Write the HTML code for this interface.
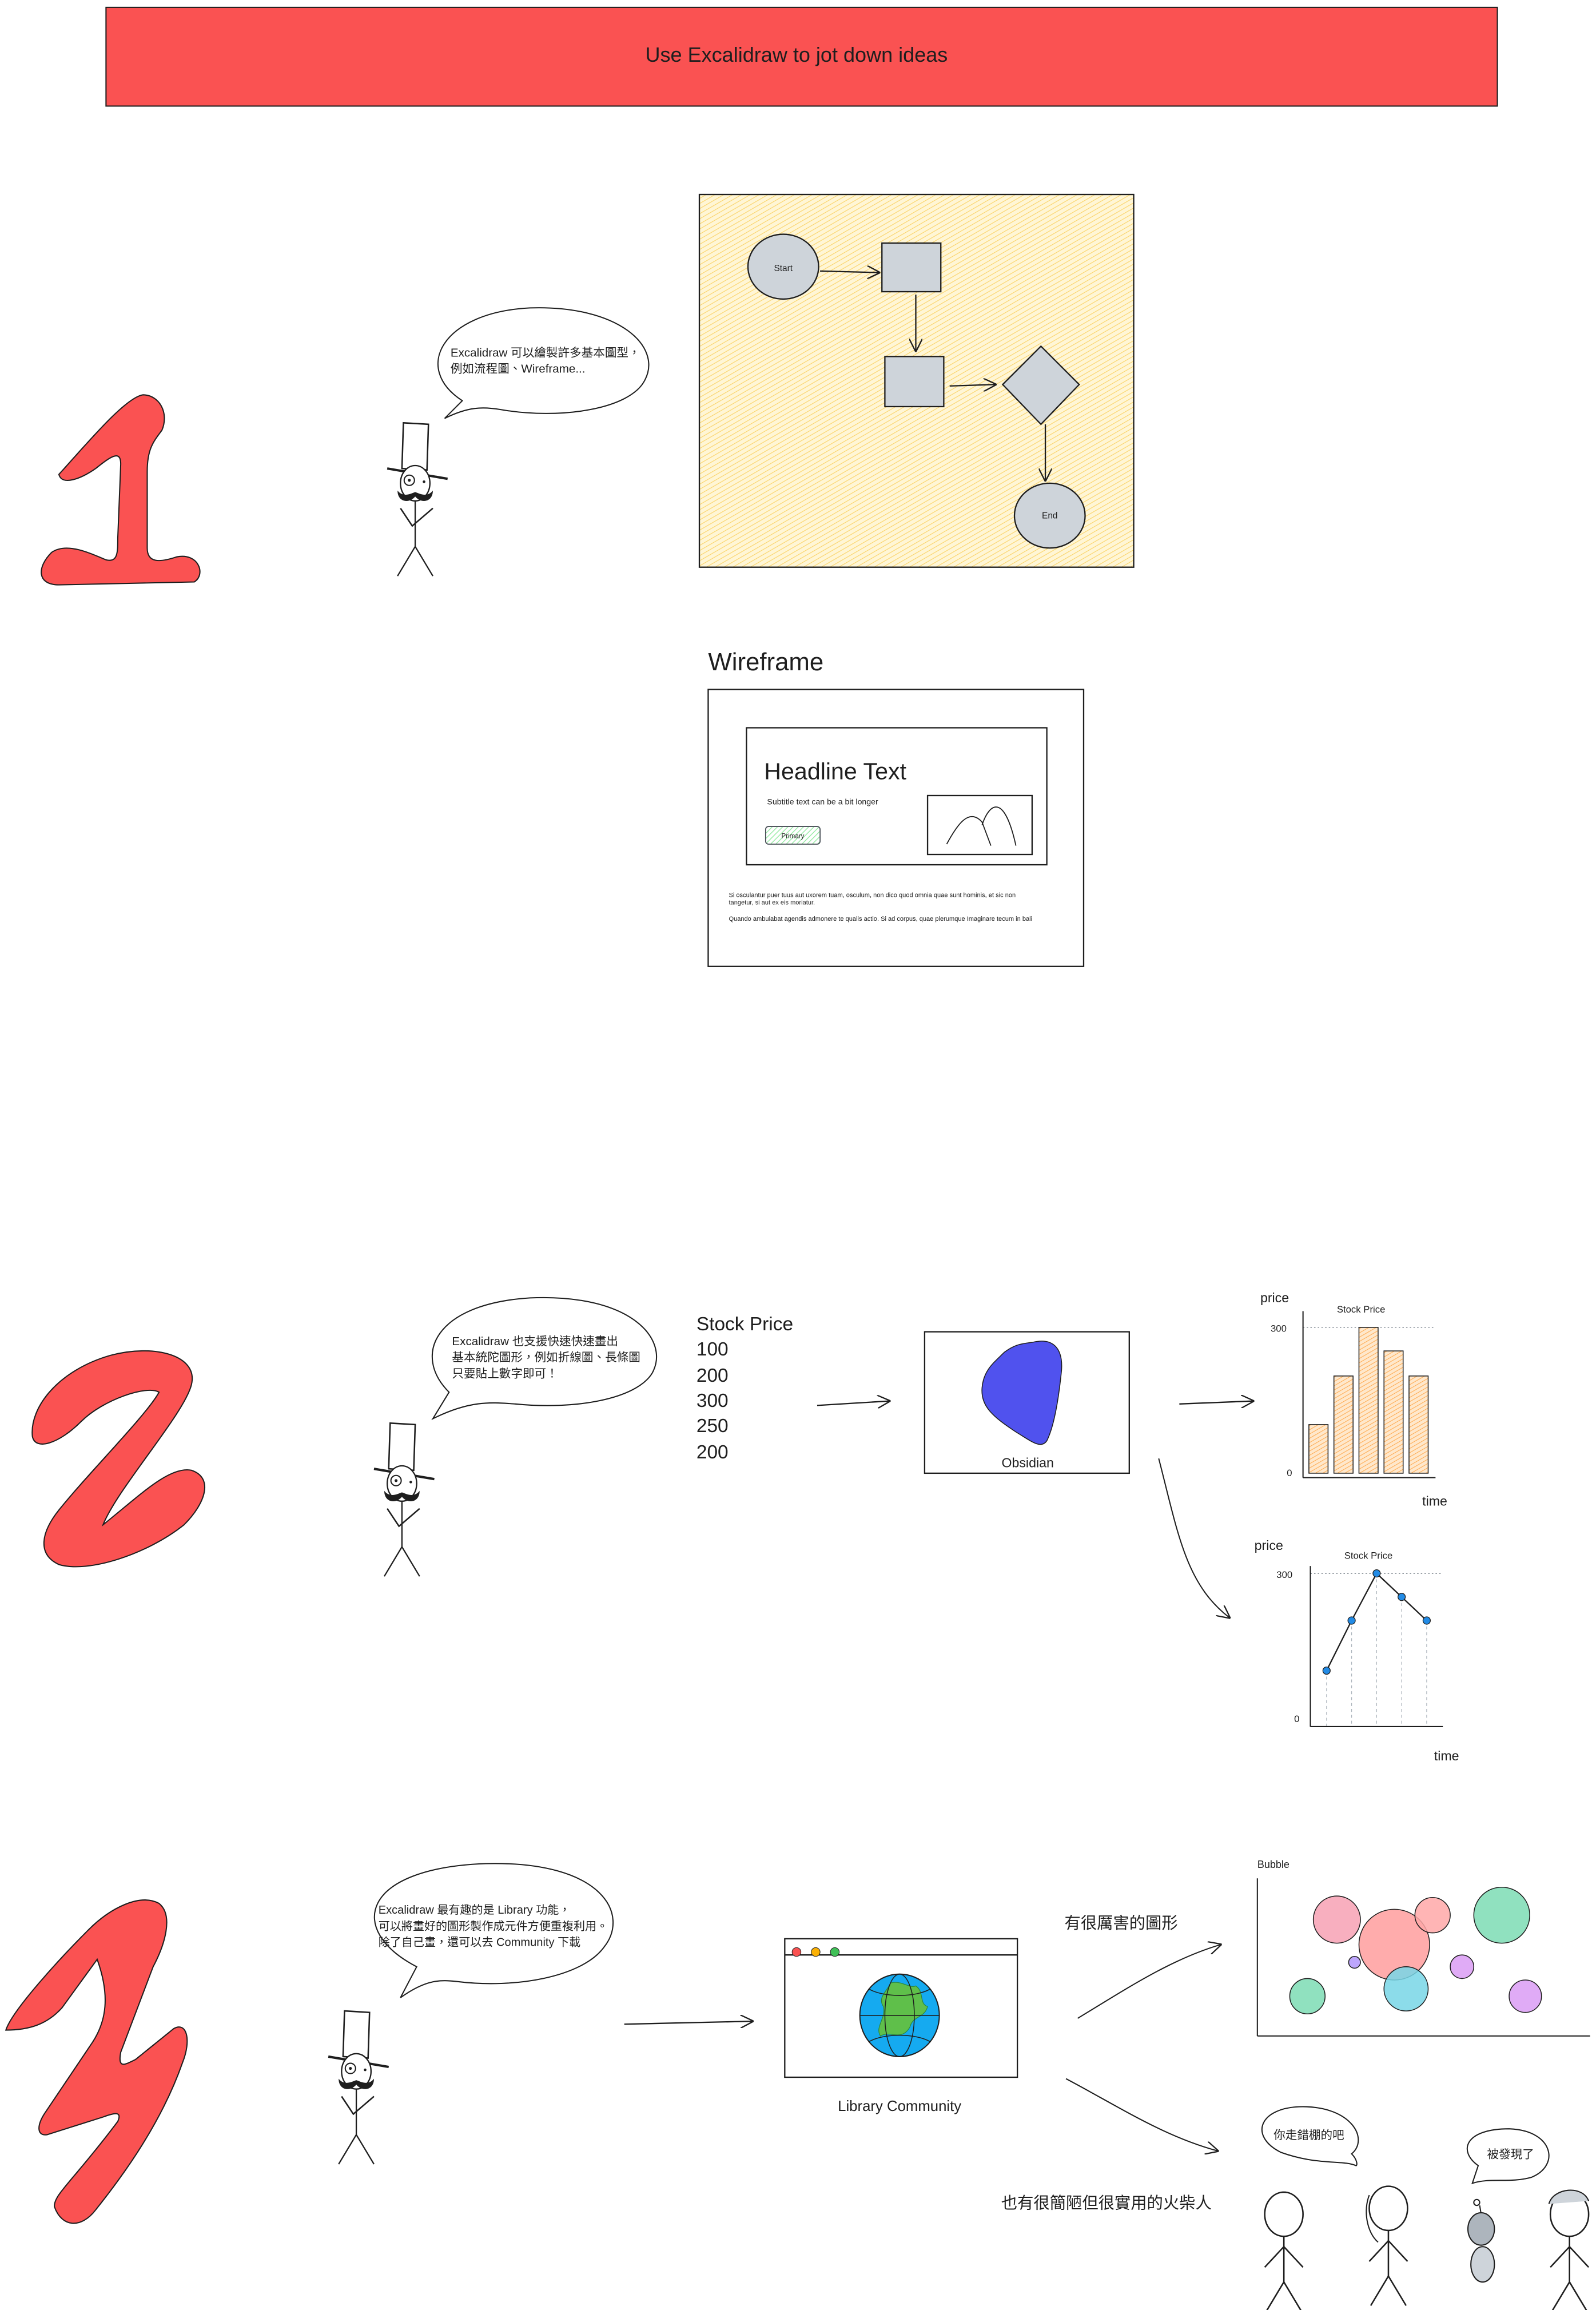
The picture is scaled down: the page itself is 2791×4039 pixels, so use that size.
<!DOCTYPE html>
<html><head><meta charset="utf-8">
<style>
html,body{margin:0;padding:0;background:#fff;}
svg{display:block;}
text{font-family:"Liberation Sans","Noto Sans CJK TC",sans-serif;fill:#1e1e1e;}
</style></head>
<body>
<svg width="2791" height="4039" viewBox="0 0 1084 1568" preserveAspectRatio="none" xmlns="http://www.w3.org/2000/svg">
<defs>
<pattern id="hy" width="3" height="3" patternUnits="userSpaceOnUse" patternTransform="rotate(60)">
<rect width="3" height="3" fill="#fff6d6"/><line x1="0" y1="0" x2="0" y2="3" stroke="#fad46a" stroke-width="0.9"/></pattern>
<pattern id="hg" width="2.5" height="2.5" patternUnits="userSpaceOnUse" patternTransform="rotate(45)">
<rect width="3" height="3" fill="#fff"/><line x1="0" y1="0" x2="0" y2="3" stroke="#8ce99a" stroke-width="1"/></pattern>
<pattern id="ho" width="2.5" height="2.5" patternUnits="userSpaceOnUse" patternTransform="rotate(60)">
<rect width="3" height="3" fill="#ffe8cc"/><line x1="0" y1="0" x2="0" y2="3" stroke="#ffa94d" stroke-width="0.8"/></pattern>
<marker id="ah" viewBox="0 0 10 10" refX="9" refY="5" markerWidth="9" markerHeight="9" orient="auto" markerUnits="userSpaceOnUse">
<path d="M0,0 L10,5 L0,10" fill="none" stroke="#1e1e1e" stroke-width="1"/></marker>
<g id="fig">
<path d="M-8,-38 L9,-37 L8,-6 L-9,-7 Z" fill="#fff" stroke="#1e1e1e" stroke-width="1"/>
<line x1="-19" y1="-7" x2="22" y2="0" stroke="#1e1e1e" stroke-width="1.6"/>
<ellipse cx="0" cy="3" rx="10" ry="12" fill="#fff" stroke="#1e1e1e" stroke-width="0.9"/>
<circle cx="-4" cy="1" r="3.5" fill="none" stroke="#1e1e1e" stroke-width="0.8"/>
<circle cx="-4" cy="1" r="1" fill="#1e1e1e"/><circle cx="6" cy="2" r="0.9" fill="#1e1e1e"/>
<path d="M-12,8 C-12,16 -4,17 0,12 C4,17 12,16 12,8 C8,13 3,10 0,9 C-3,10 -8,13 -12,8 Z" fill="#1e1e1e"/>
<line x1="0" y1="15" x2="0" y2="46" stroke="#1e1e1e" stroke-width="0.9"/>
<path d="M-10,20 L-2,32 L12,20" fill="none" stroke="#1e1e1e" stroke-width="1"/>
<path d="M-12,66 L0,46 L12,66" fill="none" stroke="#1e1e1e" stroke-width="0.9"/>
</g>
<g id="sf" fill="none" stroke="#1e1e1e" stroke-width="1">
<ellipse cx="0" cy="0" rx="13" ry="15" fill="#fff"/>
<line x1="0" y1="15" x2="0" y2="46"/><path d="M-13,36 L0,22 L13,36"/><path d="M-12,66 L0,46 L12,66"/>
</g>
</defs>

<rect x="72" y="5" width="945" height="67" fill="#fa5252" stroke="#1e1e1e" stroke-width="0.8"/>
<text x="541" y="42" font-size="14" text-anchor="middle">Use Excalidraw to jot down ideas</text>

<path d="M40,322 C60,300 85,270 97,268 C108,268 115,280 110,292 C104,300 100,305 100,320 L100,372 C100,382 108,382 120,378 C135,375 140,390 132,395 L40,397 C25,397 25,385 35,375 C45,368 60,375 72,380 C80,382 80,375 80,365 L82,315 C82,305 75,310 65,318 C55,325 42,330 40,322 Z" fill="#fa5252" stroke="#1e1e1e" stroke-width="0.8"/>

<path d="M314,272 C280,250 300,212 360,209 C420,207 450,235 438,258 C428,278 380,285 340,278 C328,276 318,276 302,284 Z" fill="#fff" stroke="#1e1e1e" stroke-width="0.8"/>
<text x="306" y="242" font-size="8">Excalidraw 可以繪製許多基本圖型，</text>
<text x="306" y="253" font-size="8">例如流程圖、Wireframe...</text>
<use href="#fig" x="282" y="325"/>

<rect x="475" y="132" width="295" height="253" fill="url(#hy)" stroke="#1e1e1e" stroke-width="0.9"/>
<ellipse cx="532" cy="181" rx="24" ry="22" fill="#ced4da" stroke="#1e1e1e" stroke-width="0.9"/>
<text x="532" y="184" font-size="6" text-anchor="middle">Start</text>
<rect x="599" y="165" width="40" height="33" fill="#ced4da" stroke="#1e1e1e" stroke-width="0.9"/>
<line x1="557" y1="184" x2="597" y2="185" stroke="#1e1e1e" stroke-width="0.9" marker-end="url(#ah)"/>
<line x1="622" y1="200" x2="622" y2="238" stroke="#1e1e1e" stroke-width="0.9" marker-end="url(#ah)"/>
<rect x="601" y="242" width="40" height="34" fill="#ced4da" stroke="#1e1e1e" stroke-width="0.9"/>
<line x1="645" y1="262" x2="676" y2="261" stroke="#1e1e1e" stroke-width="0.9" marker-end="url(#ah)"/>
<path d="M707,235 L733,261 L707,288 L681,261 Z" fill="#ced4da" stroke="#1e1e1e" stroke-width="0.9"/>
<line x1="710" y1="288" x2="710" y2="326" stroke="#1e1e1e" stroke-width="0.9" marker-end="url(#ah)"/>
<ellipse cx="713" cy="350" rx="24" ry="22" fill="#ced4da" stroke="#1e1e1e" stroke-width="0.9"/>
<text x="713" y="352" font-size="6" text-anchor="middle">End</text>

<text x="481" y="455" font-size="17">Wireframe</text>
<rect x="481" y="468" width="255" height="188" fill="#fff" stroke="#1e1e1e" stroke-width="0.9"/>
<rect x="507" y="494" width="204" height="93" fill="#fff" stroke="#1e1e1e" stroke-width="0.9"/>
<text x="519" y="529" font-size="16">Headline Text</text>
<text x="521" y="546" font-size="5.5">Subtitle text can be a bit longer</text>
<rect x="520" y="561" width="37" height="12" rx="2" fill="url(#hg)" stroke="#495057" stroke-width="0.7"/>
<text x="538.5" y="569" font-size="4.5" text-anchor="middle">Primary</text>
<rect x="630" y="540" width="71" height="40" fill="#fff" stroke="#1e1e1e" stroke-width="0.9"/>
<path d="M643,573 C650,560 658,548 667,558 L673,574 M667,560 C672,545 682,538 690,574" fill="none" stroke="#1e1e1e" stroke-width="0.7"/>
<text x="495" y="609" font-size="4.3">Si osculantur puer tuus aut uxorem tuam, osculum, non dico quod omnia quae sunt hominis, et sic non</text>
<text x="495" y="614" font-size="4.3">tangetur, si aut ex eis moriatur.</text>
<text x="495" y="625" font-size="4.3">Quando ambulabat agendis admonere te qualis actio. Si ad corpus, quae plerumque Imaginare tecum in bali</text>

<path d="M22,975 C20,955 40,930 75,920 C105,912 135,920 130,940 C125,960 80,1010 70,1035 C95,1015 115,995 130,998 C145,1003 140,1020 125,1035 C100,1055 60,1068 40,1062 C25,1055 28,1040 40,1025 C60,1000 100,960 108,945 C100,940 70,950 55,965 C40,980 24,985 22,975 Z" fill="#fa5252" stroke="#1e1e1e" stroke-width="0.8"/>

<path d="M305,945 C280,920 295,885 360,881 C430,878 455,910 443,932 C432,950 390,957 350,953 C335,952 320,950 294,963 Z" fill="#fff" stroke="#1e1e1e" stroke-width="0.8"/>
<text x="307" y="913" font-size="8">Excalidraw 也支援快速快速畫出</text>
<text x="307" y="924" font-size="8">基本統陀圖形，例如折線圖、長條圖</text>
<text x="307" y="935" font-size="8">只要貼上數字即可！</text>
<use href="#fig" x="273" y="1004"/>

<text x="473" y="903" font-size="13">Stock Price</text>
<text x="473" y="920" font-size="13">100</text>
<text x="473" y="938" font-size="13">200</text>
<text x="473" y="955" font-size="13">300</text>
<text x="473" y="972" font-size="13">250</text>
<text x="473" y="990" font-size="13">200</text>
<line x1="555" y1="954" x2="604" y2="951" stroke="#1e1e1e" stroke-width="0.9" marker-end="url(#ah)"/>

<rect x="628" y="904" width="139" height="96" fill="#fff" stroke="#1e1e1e" stroke-width="0.9"/>
<path d="M702,911 C715,908 722,915 721,930 C719,950 716,968 711,978 C707,984 700,978 690,972 C675,962 666,955 667,942 C668,930 675,925 682,918 C690,912 695,912 702,911 Z" fill="#5052ee" stroke="#1e1e1e" stroke-width="0.6"/>
<text x="698" y="996" font-size="9" text-anchor="middle">Obsidian</text>
<line x1="801" y1="953" x2="851" y2="951" stroke="#1e1e1e" stroke-width="0.9" marker-end="url(#ah)"/>

<text x="856" y="884" font-size="9">price</text>
<text x="908" y="891" font-size="6.5">Stock Price</text>
<text x="863" y="904" font-size="6.5">300</text>
<text x="874" y="1002" font-size="6.5">0</text>
<line x1="885" y1="901" x2="975" y2="901" stroke="#868e96" stroke-width="0.6" stroke-dasharray="1,1.5"/>
<line x1="885" y1="890" x2="885" y2="1003" stroke="#1e1e1e" stroke-width="0.8"/>
<line x1="885" y1="1003" x2="975" y2="1003" stroke="#1e1e1e" stroke-width="0.8"/>
<g fill="url(#ho)" stroke="#1e1e1e" stroke-width="0.6">
<rect x="889" y="967" width="13" height="33"/><rect x="906" y="934" width="13" height="66"/>
<rect x="923" y="901" width="13" height="99"/><rect x="940" y="917" width="13" height="83"/>
<rect x="957" y="934" width="13" height="66"/></g>
<text x="966" y="1022" font-size="9">time</text>

<path d="M787,990 C800,1040 805,1075 835,1098" fill="none" stroke="#1e1e1e" stroke-width="0.8" marker-end="url(#ah)"/>

<text x="852" y="1052" font-size="9">price</text>
<text x="913" y="1058" font-size="6.5">Stock Price</text>
<text x="867" y="1071" font-size="6.5">300</text>
<text x="879" y="1169" font-size="6.5">0</text>
<line x1="890" y1="1068" x2="980" y2="1068" stroke="#868e96" stroke-width="0.6" stroke-dasharray="1,1.5"/>
<g stroke="#adb5bd" stroke-width="0.5" stroke-dasharray="2,2">
<line x1="901" y1="1134" x2="901" y2="1172"/><line x1="918" y1="1100" x2="918" y2="1172"/>
<line x1="935" y1="1068" x2="935" y2="1172"/><line x1="952" y1="1084" x2="952" y2="1172"/>
<line x1="969" y1="1100" x2="969" y2="1172"/></g>
<line x1="890" y1="1063" x2="890" y2="1172" stroke="#1e1e1e" stroke-width="0.8"/>
<line x1="890" y1="1172" x2="980" y2="1172" stroke="#1e1e1e" stroke-width="0.8"/>
<polyline points="901,1134 918,1100 935,1068 952,1084 969,1100" fill="none" stroke="#1e1e1e" stroke-width="0.9"/>
<g fill="#228be6" stroke="#1e1e1e" stroke-width="0.5">
<circle cx="901" cy="1134" r="2.5"/><circle cx="918" cy="1100" r="2.5"/><circle cx="935" cy="1068" r="2.5"/>
<circle cx="952" cy="1084" r="2.5"/><circle cx="969" cy="1100" r="2.5"/></g>
<text x="974" y="1195" font-size="9">time</text>

<path d="M4,1378 C8,1365 40,1330 60,1310 C75,1295 95,1285 108,1292 C118,1300 112,1320 104,1335 L82,1393 C80,1404 84,1402 92,1398 L118,1377 C127,1372 130,1385 124,1400 C110,1440 85,1475 65,1500 C55,1513 42,1512 37,1498 C36,1490 50,1480 80,1440 C83,1433 78,1434 70,1437 L32,1449 C25,1450 25,1443 30,1435 L63,1386 C72,1372 75,1355 66,1330 L42,1363 C32,1374 20,1378 4,1378 Z" fill="#fa5252" stroke="#1e1e1e" stroke-width="0.8"/>

<path d="M283,1335 C235,1310 245,1268 330,1265 C410,1263 428,1300 410,1322 C395,1342 350,1350 310,1345 C300,1344 290,1343 272,1356 Z" fill="#fff" stroke="#1e1e1e" stroke-width="0.8"/>
<text x="257" y="1299" font-size="7.8">Excalidraw 最有趣的是 Library 功能，</text>
<text x="257" y="1310" font-size="7.8">可以將畫好的圖形製作成元件方便重複利用。</text>
<text x="257" y="1321" font-size="7.8">除了自己畫，還可以去 Community 下載</text>
<use href="#fig" x="242" y="1403"/>

<line x1="424" y1="1374" x2="511" y2="1372" stroke="#1e1e1e" stroke-width="0.9" marker-end="url(#ah)"/>

<rect x="533" y="1316" width="158" height="94" fill="#fff" stroke="#1e1e1e" stroke-width="0.9"/>
<line x1="533" y1="1327" x2="691" y2="1327" stroke="#1e1e1e" stroke-width="0.9"/>
<circle cx="541" cy="1325" r="3" fill="#fa5252" stroke="#1e1e1e" stroke-width="0.4"/>
<circle cx="554" cy="1325" r="3" fill="#fab005" stroke="#1e1e1e" stroke-width="0.4"/>
<circle cx="567" cy="1325" r="3" fill="#40c057" stroke="#1e1e1e" stroke-width="0.4"/>
<ellipse cx="611" cy="1368" rx="27" ry="28" fill="#15aaf0" stroke="#1e1e1e" stroke-width="0.8"/>
<path d="M605,1346 C612,1344 618,1350 622,1348 C628,1352 624,1360 630,1362 C628,1370 620,1368 618,1376 C612,1386 605,1378 598,1382 C594,1376 602,1370 600,1362 C596,1356 602,1352 605,1346 Z" fill="#5fbf4a" stroke="#2b8a3e" stroke-width="0.5"/>
<g fill="none" stroke="#1e1e1e" stroke-width="0.6">
<line x1="584" y1="1368" x2="638" y2="1368"/><ellipse cx="611" cy="1368" rx="10" ry="28"/>
<path d="M590,1350 C600,1356 622,1356 632,1350 M590,1386 C600,1380 622,1380 632,1386"/></g>
<text x="611" y="1433" font-size="10" text-anchor="middle">Library Community</text>

<text x="723" y="1309" font-size="11">有很厲害的圖形</text>
<path d="M732,1370 C765,1350 795,1330 829,1320" fill="none" stroke="#1e1e1e" stroke-width="0.8" marker-end="url(#ah)"/>

<text x="854" y="1268" font-size="7">Bubble</text>
<line x1="854" y1="1275" x2="854" y2="1382" stroke="#1e1e1e" stroke-width="0.8"/>
<line x1="854" y1="1382" x2="1080" y2="1382" stroke="#1e1e1e" stroke-width="0.8"/>
<g stroke="#1e1e1e" stroke-width="0.6" fill-opacity="0.85">
<circle cx="908" cy="1303" r="16" fill="#f7a1b4"/>
<circle cx="947" cy="1320" r="24" fill="#ff9e9e"/>
<circle cx="973" cy="1300" r="12" fill="#ffa8a8"/>
<circle cx="1020" cy="1300" r="19" fill="#7cdcb4"/>
<circle cx="920" cy="1332" r="4" fill="#b197fc"/>
<circle cx="993" cy="1335" r="8" fill="#da9cf5"/>
<circle cx="888" cy="1355" r="12" fill="#7cdcb4"/>
<circle cx="955" cy="1350" r="15" fill="#78d6e6"/>
<circle cx="1036" cy="1355" r="11" fill="#da9cf5"/></g>

<path d="M724,1411 C760,1430 790,1450 827,1460" fill="none" stroke="#1e1e1e" stroke-width="0.8" marker-end="url(#ah)"/>
<text x="680" y="1499" font-size="11">也有很簡陋但很實用的火柴人</text>

<path d="M870,1461 C848,1450 855,1430 885,1430 C918,1430 930,1452 918,1462 C922,1466 922,1470 921,1470 C912,1466 895,1470 870,1461 Z" fill="#fff" stroke="#1e1e1e" stroke-width="0.8"/>
<text x="889" y="1452" font-size="8" text-anchor="middle">你走錯棚的吧</text>
<path d="M1004,1470 C990,1460 995,1445 1025,1445 C1055,1446 1060,1470 1040,1478 C1025,1482 1012,1478 1000,1482 Z" fill="#fff" stroke="#1e1e1e" stroke-width="0.8"/>
<text x="1026" y="1465" font-size="8" text-anchor="middle">被發現了</text>

<use href="#sf" x="872" y="1503"/>
<use href="#sf" x="943" y="1499"/>
<path d="M930,1490 C926,1500 928,1515 936,1522" fill="none" stroke="#1e1e1e" stroke-width="0.8"/>
<g fill="none" stroke="#1e1e1e" stroke-width="0.8">
<circle cx="1003" cy="1495" r="2"/><line x1="1005" y1="1497" x2="1006" y2="1503"/>
<ellipse cx="1006" cy="1513" rx="9" ry="11" fill="#adb5bd"/>
<ellipse cx="1007" cy="1537" rx="8" ry="12" fill="#ced4da"/></g>
<use href="#sf" x="1066" y="1503"/>
<path d="M1052,1496 C1055,1485 1075,1483 1079,1494" fill="#ced4da" stroke="#1e1e1e" stroke-width="0.8"/>
</svg>
</body></html>
